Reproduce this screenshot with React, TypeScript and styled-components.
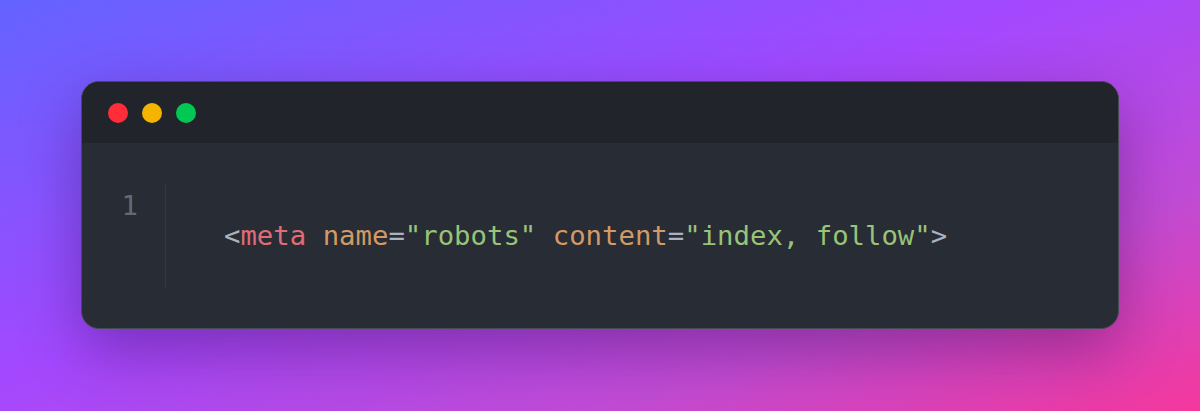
import React from "react";
import styled, { createGlobalStyle } from "styled-components";

const Global = createGlobalStyle`
  html, body { margin: 0; padding: 0; }
  body { width: 1200px; height: 411px; overflow: hidden; }
`;

const Page = styled.div`
  box-sizing: border-box;
  width: 1200px;
  height: 411px;
  padding: 81px;
  background: linear-gradient(160deg, #6363ff 0%, #a448ff 45%, #c24bd3 75%, #f5379c 100%);
  font-family: "DejaVu Sans Mono", monospace;
`;

const Window = styled.div`
  box-sizing: border-box;
  border: 1px solid #474b55;
  border-radius: 18px;
  overflow: hidden;
  background: #282c34;
  box-shadow: 0 22px 60px rgba(40, 0, 60, 0.35);
`;

const TitleBar = styled.div`
  height: 61px;
  background: #21252b;
  display: flex;
  align-items: center;
  gap: 14px;
  padding-left: 26px;
`;

const Dot = styled.span<{ $color: string }>`
  width: 20px;
  height: 20px;
  border-radius: 50%;
  background: ${(p) => p.$color};
`;

const Body = styled.div`
  padding: 40px 0;
  display: flex;
`;

const Gutter = styled.div`
  width: 84px;
  box-sizing: border-box;
  border-right: 1px solid #323741;
  height: 105px;
  padding-right: 27px;
  text-align: right;
  color: #636a77;
  font-size: 27.3px;
  line-height: 45px;
`;

const Code = styled.div`
  display: flex;
  align-items: center;
  padding-left: 58px;
  font-size: 27.3px;
  color: #abb2bf;
  white-space: pre;
`;

const Tok = styled.span<{ $c: string }>`
  color: ${(p) => p.$c};
`;

export default function App() {
  return (
    <>
      <Global />
      <Page>
        <Window>
          <TitleBar>
            <Dot $color="#ff2d3a" />
            <Dot $color="#f5b400" />
            <Dot $color="#00c853" />
          </TitleBar>
          <Body>
            <Gutter>1</Gutter>
            <Code>
              <Tok $c="#abb2bf">&lt;</Tok>
              <Tok $c="#e06c75">meta</Tok>
              <Tok $c="#abb2bf"> </Tok>
              <Tok $c="#d19a66">name</Tok>
              <Tok $c="#abb2bf">=</Tok>
              <Tok $c="#98c379">"robots"</Tok>
              <Tok $c="#abb2bf"> </Tok>
              <Tok $c="#d19a66">content</Tok>
              <Tok $c="#abb2bf">=</Tok>
              <Tok $c="#98c379">"index, follow"</Tok>
              <Tok $c="#abb2bf">&gt;</Tok>
            </Code>
          </Body>
        </Window>
      </Page>
    </>
  );
}
